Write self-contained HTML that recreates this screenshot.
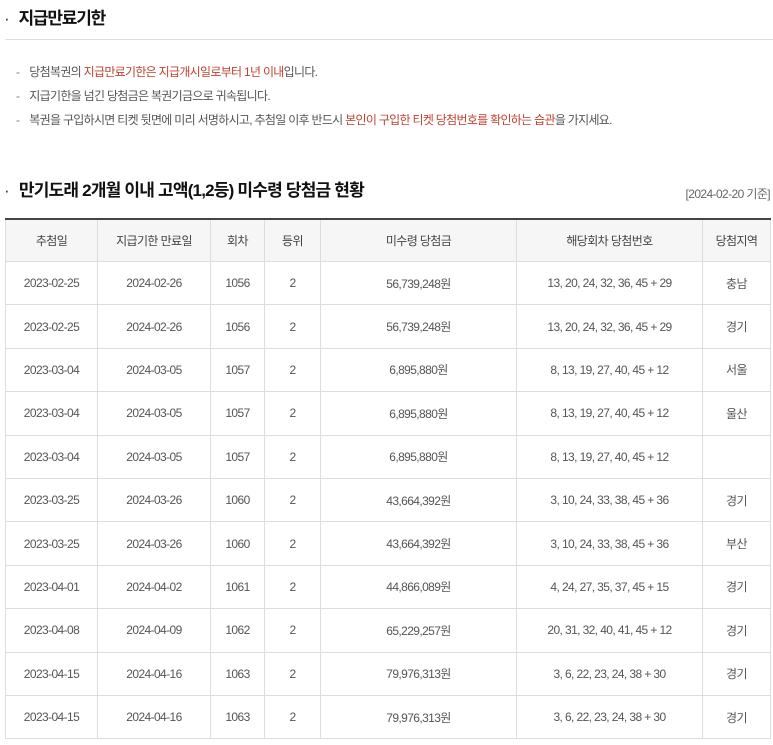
<!DOCTYPE html>
<html><head><meta charset="utf-8"><style>
body{margin:0;background:#fff;font-family:"Liberation Sans","Noto Sans CJK KR",sans-serif;color:#333;width:773px;height:745px;overflow:hidden;position:relative}
.h{position:absolute;left:4px;font-weight:bold;color:#111;font-size:17px;letter-spacing:-0.8px}
.h span{font-weight:normal;margin-right:10px;color:#333}
.line{position:absolute;left:5px;right:0;top:39px;border-top:1px solid #ddd}
ul{position:absolute;left:16px;top:62px;margin:0;padding:0;list-style:none;font-size:12px;color:#555;letter-spacing:-0.7px}
li{height:24px;line-height:20px}
li:before{content:"-";margin-right:10px;color:#777}
.r{color:#c2412f}
.base{position:absolute;right:3px;top:185px;font-size:12px;color:#666;letter-spacing:-0.6px}
table{position:absolute;left:5px;top:218px;width:766px;border-collapse:collapse;font-size:12px;color:#555;letter-spacing:-0.6px}
th,td{border:1px solid #ddd;text-align:center;padding:0}
tr:first-child th{border-top:2px solid #444}
th{background:#f6f6f6;font-weight:normal;height:41px;color:#444}
td{height:42.4px}
</style></head><body>
<div class="h" style="top:4px;letter-spacing:-1.2px"><span>·</span>지급만료기한</div>
<div class="line"></div>
<ul>
<li>당첨복권의 <span class="r">지급만료기한은 지급개시일로부터 1년 이내</span>입니다.</li>
<li>지급기한을 넘긴 당첨금은 복권기금으로 귀속됩니다.</li>
<li>복권을 구입하시면 티켓 뒷면에 미리 서명하시고, 추첨일 이후 반드시 <span class="r">본인이 구입한 티켓 당첨번호를 확인하는 습관</span>을 가지세요.</li>
</ul>
<div class="h" style="top:176px"><span>·</span>만기도래 2개월 이내 고액(1,2등) 미수령 당첨금 현황</div>
<div class="base">[2024-02-20 기준]</div>
<table>
<tr><th style="width:91px">추첨일</th><th style="width:112px">지급기한 만료일</th><th style="width:53px">회차</th><th style="width:55px">등위</th><th style="width:195px">미수령 당첨금</th><th style="width:185px">해당회차 당첨번호</th><th>당첨지역</th></tr>
<tr><td>2023-02-25</td><td>2024-02-26</td><td>1056</td><td>2</td><td>56,739,248원</td><td>13, 20, 24, 32, 36, 45 + 29</td><td>충남</td></tr>
<tr><td>2023-02-25</td><td>2024-02-26</td><td>1056</td><td>2</td><td>56,739,248원</td><td>13, 20, 24, 32, 36, 45 + 29</td><td>경기</td></tr>
<tr><td>2023-03-04</td><td>2024-03-05</td><td>1057</td><td>2</td><td>6,895,880원</td><td>8, 13, 19, 27, 40, 45 + 12</td><td>서울</td></tr>
<tr><td>2023-03-04</td><td>2024-03-05</td><td>1057</td><td>2</td><td>6,895,880원</td><td>8, 13, 19, 27, 40, 45 + 12</td><td>울산</td></tr>
<tr><td>2023-03-04</td><td>2024-03-05</td><td>1057</td><td>2</td><td>6,895,880원</td><td>8, 13, 19, 27, 40, 45 + 12</td><td></td></tr>
<tr><td>2023-03-25</td><td>2024-03-26</td><td>1060</td><td>2</td><td>43,664,392원</td><td>3, 10, 24, 33, 38, 45 + 36</td><td>경기</td></tr>
<tr><td>2023-03-25</td><td>2024-03-26</td><td>1060</td><td>2</td><td>43,664,392원</td><td>3, 10, 24, 33, 38, 45 + 36</td><td>부산</td></tr>
<tr><td>2023-04-01</td><td>2024-04-02</td><td>1061</td><td>2</td><td>44,866,089원</td><td>4, 24, 27, 35, 37, 45 + 15</td><td>경기</td></tr>
<tr><td>2023-04-08</td><td>2024-04-09</td><td>1062</td><td>2</td><td>65,229,257원</td><td>20, 31, 32, 40, 41, 45 + 12</td><td>경기</td></tr>
<tr><td>2023-04-15</td><td>2024-04-16</td><td>1063</td><td>2</td><td>79,976,313원</td><td>3, 6, 22, 23, 24, 38 + 30</td><td>경기</td></tr>
<tr><td>2023-04-15</td><td>2024-04-16</td><td>1063</td><td>2</td><td>79,976,313원</td><td>3, 6, 22, 23, 24, 38 + 30</td><td>경기</td></tr>
</table>
</body></html>
